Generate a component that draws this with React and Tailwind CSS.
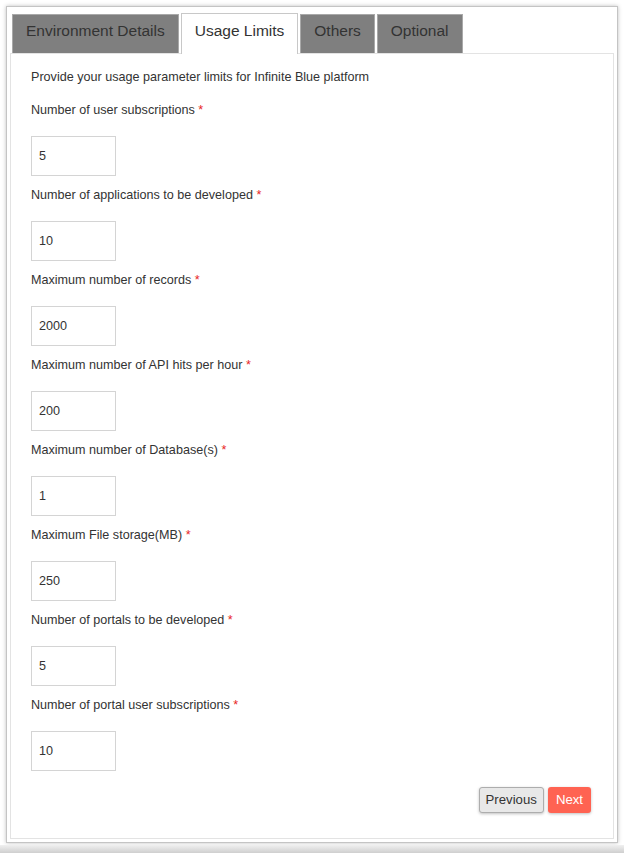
import { useState } from "react";

const fields = [
  { label: "Number of user subscriptions", value: "5" },
  { label: "Number of applications to be developed", value: "10" },
  { label: "Maximum number of records", value: "2000" },
  { label: "Maximum number of API hits per hour", value: "200" },
  { label: "Maximum number of Database(s)", value: "1" },
  { label: "Maximum File storage(MB)", value: "250" },
  { label: "Number of portals to be developed", value: "5" },
  { label: "Number of portal user subscriptions", value: "10" },
];

const tabs = ["Environment Details", "Usage Limits", "Others", "Optional"];

export default function App() {
  const [active, setActive] = useState(1);
  const [vals, setVals] = useState(fields.map((f) => f.value));

  return (
    <div
      className="w-[624px] h-[853px] bg-white flex flex-col"
      style={{ fontFamily: '"Liberation Sans", Arial, sans-serif' }}
    >
      <div className="pt-[6px] px-[6px]">
        <div className="h-[837px] border border-[#c4c4c4] shadow-[0_0_4px_rgba(0,0,0,0.25)] bg-white p-[3px] flex flex-col">
          {/* tabs */}
          <div className="flex items-end pl-[2px] pt-[2px] gap-[2px] h-[43px]">
            {tabs.map((t, i) =>
              i === active ? (
                <button
                  key={t}
                  onClick={() => setActive(i)}
                  className="h-[41px] px-[13px] pt-[7px] flex items-start leading-[20px] bg-white border border-b-0 border-[#c8c8c8] text-[15.5px] text-[#333] relative -mb-px z-10"
                >
                  {t}
                </button>
              ) : (
                <button
                  key={t}
                  onClick={() => setActive(i)}
                  className="h-[39px] px-[13px] pt-[6px] flex items-start leading-[20px] bg-[#7f7f7f] border border-b-0 border-[#a9a9a9] text-[15.5px] text-[#333]"
                >
                  {t}
                </button>
              )
            )}
          </div>

          {/* panel */}
          <div className="flex-1 border border-[#e3e3e3] px-[20px] pt-[13px] flex flex-col">
            <p className="text-[12.6px] leading-[20px] text-[#333]">
              Provide your usage parameter limits for Infinite Blue platform
            </p>
            <div className="mt-[13px] flex flex-col">
              {fields.map((f, i) => (
                <div key={f.label} className="flex flex-col mb-[8px]">
                  <label className="text-[12.6px] leading-[20px] text-[#333]">
                    {f.label} <span className="text-[#e8251f]">*</span>
                  </label>
                  <input
                    value={vals[i]}
                    onChange={(e) => {
                      const v = [...vals];
                      v[i] = e.target.value;
                      setVals(v);
                    }}
                    className="mt-[16px] mb-px w-[85px] h-[40px] border border-[#d4d4d4] px-[7px] text-[12.6px] text-[#333] outline-none"
                  />
                </div>
              ))}
            </div>
            <div className="flex justify-end gap-[4px] mt-[7px] pr-[2px]">
              <button className="h-[26px] px-[6px] bg-[#e8e8e8] border border-[#adadad] rounded-[3px] text-[13.2px] text-[#333] shadow-[0_1px_3px_rgba(0,0,0,0.25)]">
                Previous
              </button>
              <button className="h-[26px] px-[8px] bg-[#ff6352] rounded-[3px] text-[13.2px] font-medium text-white shadow-[0_1px_3px_rgba(0,0,0,0.25)]">
                Next
              </button>
            </div>
          </div>
        </div>
      </div>
      <div className="mt-auto h-[8px] bg-gradient-to-b from-[#f0f0f0] to-[#cfcfcf]" />
    </div>
  );
}
